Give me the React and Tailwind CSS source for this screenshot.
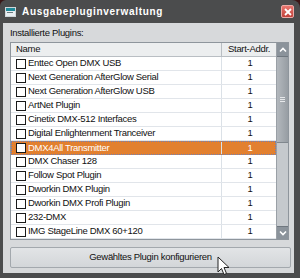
import React from "react";

const plugins = [
  "Enttec Open DMX USB",
  "Next Generation AfterGlow Serial",
  "Next Generation AfterGlow USB",
  "ArtNet Plugin",
  "Cinetix DMX-512 Interfaces",
  "Digital Enlightenment Tranceiver",
  "DMX4All Transmitter",
  "DMX Chaser 128",
  "Follow Spot Plugin",
  "Dworkin DMX Plugin",
  "Dworkin DMX Profi Plugin",
  "232-DMX",
  "IMG StageLine DMX 60+120",
];

const SELECTED = 6;

function Checkbox() {
  return <span className="w-[10px] h-[10px] shrink-0 border-[1.5px] border-[#1a1a1a] bg-white" />;
}

function Chevron({ down }) {
  return (
    <svg width="8" height="6" viewBox="0 0 8 6">
      <path
        d={down ? "M1 1.5 L4 4.5 L7 1.5" : "M1 4.5 L4 1.5 L7 4.5"}
        fill="none"
        stroke="white"
        strokeWidth="1.6"
      />
    </svg>
  );
}

export default function App() {
  return (
    <div
      className="w-[300px] h-[278px] bg-[#3b1616] overflow-hidden"
      style={{ fontFamily: '"Liberation Sans", Arial, sans-serif' }}
    >
      <div className="h-full flex flex-col bg-[#4b4c4d] rounded-tl-[6px] rounded-tr-[8px]">
        {/* title bar */}
        <div className="h-[23px] shrink-0 flex items-center pl-[5px] pr-[6px]">
          <svg width="11" height="10" viewBox="0 0 11 10" className="mt-[1px]">
            <rect x="0.5" y="0.5" width="10" height="9" fill="#e8eef2" stroke="#cfd6da" />
            <rect x="1" y="1" width="9" height="3" fill="#1f8a9a" />
            <rect x="2" y="5" width="6" height="1" fill="#6a7a80" />
          </svg>
          <span className="ml-[6px] text-white font-bold text-[10px] tracking-[0.7px] leading-none">
            Ausgabepluginverwaltung
          </span>
          <div className="ml-auto w-[13px] h-[13px] rounded-[2px] border border-[#eba9a6] bg-gradient-to-b from-[#e8766f] to-[#c0403a] flex items-center justify-center">
            <svg width="8" height="8" viewBox="0 0 8 8">
              <path d="M1 1 L7 7 M7 1 L1 7" stroke="white" strokeWidth="1.8" />
            </svg>
          </div>
        </div>

        {/* body */}
        <div className="relative flex-1 ml-[3px] mr-[6px] mb-[5px] bg-[#d7d9db] pl-[7px] pt-[3px] flex flex-col text-[9.5px] tracking-[-0.3px] text-[#111]">
          <div className="leading-[14px]">Installierte Plugins:</div>

          <div className="mt-[2px] w-[279px] border border-[#8e959c] bg-white flex">
            <div className="w-[265px] flex flex-col">
              {/* header */}
              <div className="h-[14px] flex bg-[#eceeef] border-b border-[#b9bec3]">
                <div className="w-[211px] pl-[5px] flex items-center border-r border-[#b9bec3]">Name</div>
                <div className="w-[54px] pl-[6px] flex items-center">Start-Addr.</div>
              </div>
              {plugins.map((p, i) => {
                const sel = i === SELECTED;
                return (
                  <div
                    key={p}
                    className={
                      sel
                        ? "h-[14px] flex bg-[#e2802f] text-white outline outline-1 outline-dotted outline-[#6e7fb8] -outline-offset-1"
                        : "h-[14px] flex border-b border-[#e1e5ea]"
                    }
                  >
                    <div className="w-[211px] pl-[5px] flex items-center gap-[2px] overflow-hidden whitespace-nowrap border-r border-[#dbe1e7]">
                      <Checkbox />
                      <span>{p}</span>
                    </div>
                    <div className="w-[54px] flex items-center justify-center pl-[2px]">1</div>
                  </div>
                );
              })}
            </div>

            {/* scrollbar */}
            <div className="w-[12px] flex flex-col bg-[#c5c9cd] border-l border-[#9aa0a6]">
              <div className="h-[14px] bg-[#8b939b] border-b border-[#6f777f] flex items-center justify-center">
                <Chevron />
              </div>
              <div className="h-[86px] bg-gradient-to-r from-[#b3b8bd] to-[#979da3] border-b border-[#80878e] flex items-center justify-center">
                <div className="flex flex-col gap-[1px]">
                  <span className="w-[5px] h-[1px] bg-[#e6e8ea]" />
                  <span className="w-[5px] h-[1px] bg-[#e6e8ea]" />
                  <span className="w-[5px] h-[1px] bg-[#e6e8ea]" />
                </div>
              </div>
              <div className="flex-1" />
              <div className="h-[13px] bg-[#8b939b] border-t border-[#6f777f] flex items-center justify-center">
                <Chevron down />
              </div>
            </div>
          </div>

          <div className="mt-[7px] w-[281px] h-[21px] rounded-[2px] border border-[#a3a8ad] bg-gradient-to-b from-[#e2e4e6] to-[#d3d6d9] flex items-center justify-center">
            Gewähltes Plugin konfigurieren
          </div>

          {/* mouse cursor */}
          <svg
            className="absolute left-[214px] top-[233px]"
            width="13"
            height="21"
            viewBox="0 0 13 21"
          >
            <path
              d="M1 1 L1 16 L4.5 12.5 L7 18.5 L9.5 17.5 L7 11.5 L12 11.5 Z"
              fill="white"
              stroke="#222"
              strokeWidth="1"
              strokeLinejoin="round"
            />
          </svg>
        </div>
      </div>
    </div>
  );
}
